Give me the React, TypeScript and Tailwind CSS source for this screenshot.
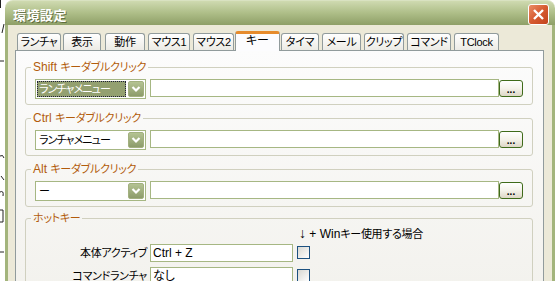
import React from "react";

const font =
  "font-['Liberation_Sans','Noto_Sans_CJK_JP',sans-serif] [font-feature-settings:'palt']";

const tabs = [
  { label: "ランチャ", cls: "ml-[2px] w-[44px]" },
  { label: "表示", cls: "ml-[2px] w-[38px]" },
  { label: "動作", cls: "ml-[4px] w-[40px]" },
  { label: "マウス1", cls: "ml-[3px] w-[42px]" },
  { label: "マウス2", cls: "ml-[3px] w-[41px]" },
  { label: "キー", cls: "ml-[1px] w-[45px]", active: true },
  { label: "タイマ", cls: "ml-[1px] w-[38px]" },
  { label: "メール", cls: "ml-[3px] w-[39px]" },
  { label: "クリップ", cls: "ml-[3px] w-[40px]" },
  { label: "コマンド", cls: "ml-[3px] w-[44px]" },
  { label: "TClock", cls: "ml-[3px] w-[45px]" },
];

const groups = [
  { key: "Shift", value: "ランチャメニュー", selected: true, cls: "" },
  { key: "Ctrl", value: "ランチャメニュー", selected: false, cls: "mt-[6px]" },
  { key: "Alt", value: "ー", selected: false, cls: "mt-[6px]" },
];

const hotkeys = [
  { label: "本体アクティブ", value: "Ctrl + Z" },
  { label: "コマンドランチャ", value: "なし" },
];

function DropButton() {
  return (
    <div className="w-[16px] h-[16px] rounded-[2px] bg-gradient-to-b from-[#b4c392] to-[#8d9c6b] border border-[#a2b07f] flex items-center justify-center">
      <svg width="10" height="8" viewBox="0 0 10 8">
        <path d="M1.5 2 L5 5.5 L8.5 2" fill="none" stroke="#ffffff" strokeWidth="2.2" />
      </svg>
    </div>
  );
}

function Combo({ value, selected }: { value: string; selected: boolean }) {
  return (
    <div className="w-[111px] h-[20px] border border-[#a6b783] bg-white p-[1px] flex gap-[2px]">
      {selected ? (
        <div className="flex-1 h-[16px] bg-[#93a070] border border-dotted border-[#20203a] text-white text-[11px] leading-[14px] pl-[1px] tracking-[-0.9px] whitespace-nowrap overflow-hidden">
          {value}
        </div>
      ) : (
        <div className="flex-1 h-[16px] text-black text-[11px] leading-[16px] pl-[2px] tracking-[-0.9px] whitespace-nowrap overflow-hidden">
          {value}
        </div>
      )}
      <DropButton />
    </div>
  );
}

function DotsButton() {
  return (
    <div className="w-[24px] h-[17px] mt-[1px] rounded-[3px] border border-[#3f6b1a] bg-gradient-to-b from-white via-[#f4f2ea] to-[#ddd7c6] flex items-end justify-center text-[10px] leading-[12px] font-bold text-black">
      ...
    </div>
  );
}

export default function App() {
  return (
    <div className={`w-[559px] h-[281px] overflow-hidden bg-white flex ${font}`}>
      {/* window behind (fragments only) */}
      <div className="w-[5px] overflow-hidden">
        <svg width="5" height="281" viewBox="0 0 5 281">
          <path
            d="M0.5 0 V8 M4 24 L2 33 M0 61 H4 M0 156 Q3 154 4 158 M1 176 L4 180 M0 192 Q4 190 3 196 M0 210 H3 V222 H0 M0 252 H4"
            fill="none"
            stroke="#222"
            strokeWidth="1"
          />
        </svg>
      </div>

      {/* dialog */}
      <div className="w-[550px] flex flex-col">
        <div className="h-[28px] rounded-t-[8px] bg-gradient-to-b from-[#cfdab0] via-[#aebe88] to-[#8e9f67] border-t border-[#d9e2c1] flex items-start justify-between pl-[8px] pr-[6px]">
          <span className="mt-[7px] text-[13px] leading-[15px] font-bold text-white tracking-[0.5px] [text-shadow:1px_1px_0_rgba(60,70,30,0.6)]">
            環境設定
          </span>
          <div className="mt-[3px] w-[21px] h-[21px] rounded-[3px] border border-white bg-gradient-to-br from-[#ea8d66] via-[#d65a30] to-[#c2431c] flex items-center justify-center">
            <svg width="13" height="13" viewBox="0 0 13 13">
              <path d="M2 2 L11 11 M11 2 L2 11" stroke="#ffffff" strokeWidth="2.4" />
            </svg>
          </div>
        </div>

        <div className="flex-1 bg-[#ece9d8] border-x-[3px] border-[#a3b47c] flex flex-col">
          {/* tabs */}
          <div className="ml-[7px] pt-[6px] h-[25px] flex items-end">
            {tabs.map((t) =>
              t.active ? (
                <div
                  key={t.label}
                  className={`${t.cls} relative z-10 -mb-px h-[20px] rounded-t-[3px] border-x border-[#919b9c] border-t-[3px] border-t-[#e68b2c] bg-[#fcfcfe] text-[12px] leading-[15px] text-black text-center`}
                >
                  {t.label}
                </div>
              ) : (
                <div
                  key={t.label}
                  className={`${t.cls} h-[17px] rounded-t-[3px] border border-b-0 border-[#919b9c] bg-gradient-to-b from-white to-[#ecebe5] text-[11px] leading-[16px] tracking-[-0.3px] text-black text-center whitespace-nowrap`}
                >
                  {t.label}
                </div>
              )
            )}
          </div>

          {/* panel */}
          <div className="ml-[7px] mr-[8px] h-[260px] border border-[#919b9c] bg-gradient-to-b from-[#fcfcfc] to-[#f2f1ec] pt-[9px] pl-[9px] pr-[10px]">
            {groups.map((g) => (
              <fieldset
                key={g.key}
                className={`${g.cls} border border-[#d0d0bf] rounded-[3px] px-[9px] pt-[5px] pb-[5px]`}
              >
                <legend className="-ml-[4px] px-[2px] text-[12px] leading-[14px] text-[#b25c0c] whitespace-nowrap">
                  {g.key} <span className="text-[11px] tracking-[-0.3px]">キーダブルクリック</span>
                </legend>
                <div className="flex items-start">
                  <Combo value={g.value} selected={g.selected} />
                  <div className="ml-[4px] flex-1 h-[18px] border border-[#a6b783] bg-white" />
                  <DotsButton />
                </div>
              </fieldset>
            ))}

            <fieldset className="mt-[4px] border border-[#d0d0bf] rounded-[3px] px-[9px] pt-[1px] pb-[8px]">
              <legend className="-ml-[4px] px-[2px] text-[11px] leading-[14px] tracking-[-0.3px] text-[#b25c0c]">
                ホットキー
              </legend>
              <div className="pl-[264px] text-[12px] leading-[14px] text-black whitespace-nowrap">
                <span className="text-[14px]">↓</span> + Win<span className="text-[11px] tracking-[-0.3px]">キー使用する場合</span>
              </div>
              <div className="mt-[3px] flex flex-col gap-[5px]">
                {hotkeys.map((h) => (
                  <div key={h.label} className="flex items-start">
                    <span className="w-[112px] text-right text-[11px] leading-[18px] tracking-[-0.3px] text-black whitespace-nowrap">
                      {h.label}
                    </span>
                    <div className="ml-[3px] w-[143px] h-[18px] border border-[#a6b783] bg-white text-[12px] leading-[16px] pl-[2px] text-black">
                      {h.value}
                    </div>
                    <div className="ml-[4px] mt-[2px] w-[13px] h-[13px] border border-[#1c5180] bg-gradient-to-br from-[#d8d8d2] to-white" />
                  </div>
                ))}
              </div>
            </fieldset>
          </div>
        </div>
      </div>
    </div>
  );
}
